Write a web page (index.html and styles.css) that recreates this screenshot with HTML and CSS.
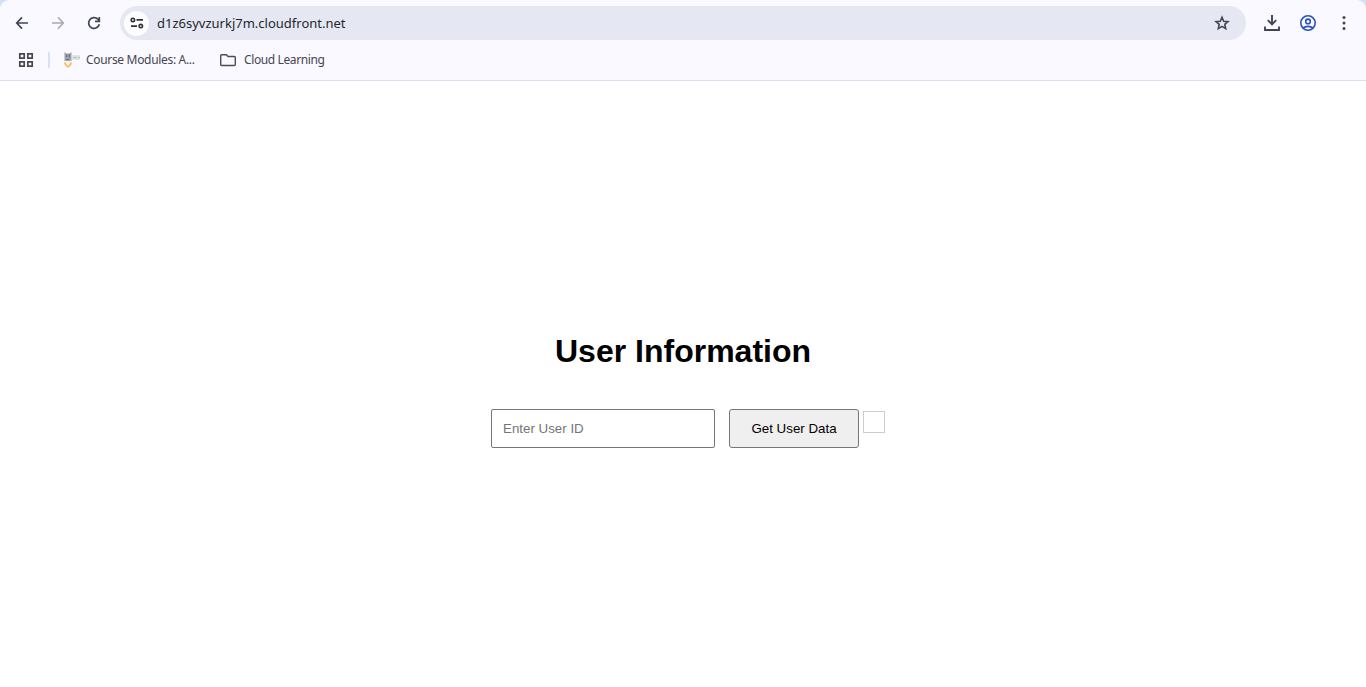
FILE: index.html
```
<!DOCTYPE html>
<html lang="en">
<head>
<meta charset="utf-8">
<title>User Information</title>
<link rel="stylesheet" href="styles.css">
</head>
<body>
<header class="browser">
  <div class="chrome">
    <nav class="toolbar">
      <svg class="icon" viewBox="0 0 20 20"><path d="M16 10H5M10 4.3 4.7 10l5.3 5.7" fill="none" stroke="#414657" stroke-width="1.7"/></svg>
      <svg class="icon" viewBox="0 0 20 20"><path d="M4 10h11M10 4.3l5.3 5.7-5.3 5.7" fill="none" stroke="#aaa9af" stroke-width="1.6"/></svg>
      <svg class="icon" viewBox="0 0 20 20"><g fill="none" stroke="#414657" stroke-width="1.7"><path d="M15.300 11.200A5.400 5.400 0 1 1 13.900 6.200L15.300 7.600"/><path d="M15.300 4v4.300H11"/></g></svg>
      <div class="address">
        <span class="site"><svg class="icon" viewBox="0 0 20 20"><g fill="none" stroke="#303239" stroke-width="1.6"><circle cx="5.900" cy="6.900" r="1.700"/><path d="M9.500 6.900H16M4 13.100h6"/><circle cx="13.800" cy="13.100" r="1.700"/></g></svg></span>
        <span class="url">d1z6syvzurkj7m.cloudfront.net</span>
        <svg class="icon" viewBox="0 0 20 20"><path d="m10 4.300 1.700 3.900 4.300.4-3.200 2.800.9 4.200-3.700-2.200-3.700 2.200.9-4.200L4 8.600l4.300-.4z" fill="none" stroke="#44464f" stroke-width="1.600"/></svg>
      </div>
      <div class="actions">
        <svg class="icon" viewBox="0 0 20 20"><path d="M10 2v9M5.800 7.200l4.200 4.200 4.200-4.200M3 13.500V17h14v-3.500" fill="none" stroke="#414657" stroke-width="1.900"/></svg>
        <svg class="icon" viewBox="0 0 20 20"><g fill="none" stroke="#2c50bd" stroke-width="1.600"><circle cx="10" cy="10" r="7.200"/><circle cx="10" cy="8.400" r="2.300"/><path d="M5 15.200c2.600-2.500 7.400-2.500 10 0"/></g></svg>
        <svg class="icon" viewBox="0 0 20 20"><g fill="#414657"><circle cx="10" cy="4.500" r="1.500"/><circle cx="10" cy="10" r="1.500"/><circle cx="10" cy="15.500" r="1.500"/></g></svg>
      </div>
    </nav>
    <nav class="bookmarks">
      <svg class="apps" viewBox="0 0 20 20"><path d="M3.800 3.800h4.400v4.400H3.800zM11.800 3.800h4.400v4.400h-4.400zM3.800 11.800h4.400v4.400H3.800zM11.800 11.800h4.400v4.400h-4.400z" fill="none" stroke="#47474d" stroke-width="1.700"/></svg>
      <span class="divider"></span>
      <svg class="course" viewBox="0 0 16 16"><path d="m.5 0 2 1.500h3L7.500 0v9h-7z" fill="#a0a4ac"/><path d="M2.500 2.500V5M5.300 2v3.500M2 7.500h3" stroke="#69717e" stroke-width="1.200"/><path d="M8 3h8v5H8z" fill="#e3e3ea"/><path d="M9 5.500h2M12 4.500v2.500M14 5.500h2" stroke="#b7b8c2"/><path d="M1 9.500h6v3l-3 1.500-3-1.500z" fill="#fff1dc"/><path d="M.8 10.500c0 2.300 1.700 3 3.200 4.300 1.500-1.300 3.200-2 3.200-4.300" fill="none" stroke="#f8b85e" stroke-width="1.700"/></svg>
      <span class="label course-label">Course Modules: A...</span>
      <svg class="folder" viewBox="0 0 16 14"><path d="M1.700 1.700h4.600L8 3.500h6.300q1 0 1 1v7q0 1-1 1H1.700q-1 0-1-1v-8.800q0-1 1-1z" fill="none" stroke="#4b4b52" stroke-width="1.400"/></svg>
      <span class="label folder-label">Cloud Learning</span>
    </nav>
  </div>
</header>
<main class="page">
  <h1 class="title">User Information</h1>
  <div class="form">
    <input class="user-id" type="text" placeholder="Enter User ID">
    <button class="submit">Get User Data</button>
    <div class="result"></div>
  </div>
</main>
</body>
</html>
```
FILE: styles.css
```
* { box-sizing: border-box; }
body { margin: 0; height: 687px; overflow: hidden; background: #fff; font-family: "Liberation Sans", Arial, sans-serif; }
svg { display: block; flex: none; }
.browser { background: #d5dff8; }
.chrome { height: 81px; background: #faf9ff; border-bottom: 1px solid #dfe0ec; border-radius: 9px 9px 0 0; font-family: "Noto Sans", "Open Sans", sans-serif; }
.toolbar { display: flex; align-items: center; gap: 16px; height: 46px; padding: 0 12px; }
.icon { width: 20px; height: 20px; }
.address { display: flex; align-items: center; flex: none; width: 1126px; height: 34px; padding: 0 14px 0 4px; border-radius: 17px; background: #e5e8f3; }
.site { display: flex; align-items: center; justify-content: center; width: 25px; height: 25px; border-radius: 50%; background: #fdfcff; }
.url { flex: 1; margin-left: 8px; color: #25262b; font-size: 13px; line-height: 20px; white-space: nowrap; }
.actions { display: flex; gap: 16px; }
.bookmarks { display: flex; align-items: center; height: 28px; padding-left: 16px; }
.apps { width: 20px; height: 20px; }
.divider { width: 2px; height: 16px; margin: 0 14px 0 12px; background: #d5e2fb; }
.course { width: 16px; height: 16px; }
.label { color: #45464e; font-size: 12px; line-height: 18px; letter-spacing: -0.32px; white-space: nowrap; }
.course-label { width: 110px; margin-left: 6px; }
.folder { width: 16px; height: 14px; margin-left: 24px; }
.folder-label { margin-left: 8px; letter-spacing: -0.38px; }
.page { display: flex; flex-direction: column; align-items: center; height: 606px; padding-top: 252px; }
.title { margin: 0; font-size: 32px; line-height: 37px; font-weight: 700; color: #000; }
.form { display: flex; align-items: flex-start; margin-top: 39px; padding-left: 10px; }
.user-id { width: 224px; height: 39px; padding: 10px 11px; border: 1px solid #767676; border-radius: 2px; font: 13.333px "Liberation Sans", Arial, sans-serif; outline: 0; }
.user-id::placeholder { color: #757575; }
.submit { width: 130px; height: 39px; margin-left: 14px; padding: 0; border: 1px solid #767676; border-radius: 3px; background: #efefef; color: #000; font: 13.333px "Liberation Sans", Arial, sans-serif; }
.result { width: 22px; height: 22px; margin: 2px 0 0 4px; border: 1px solid #ccc; }
```
